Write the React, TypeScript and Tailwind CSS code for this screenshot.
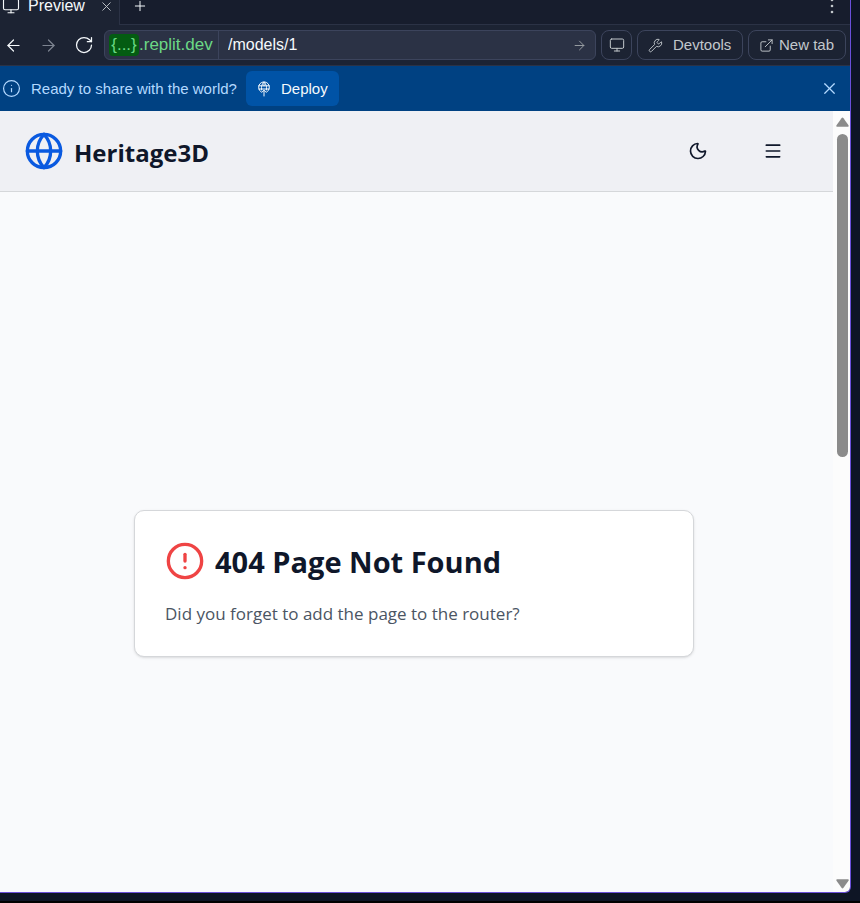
import type { ReactNode } from "react";
import {
  ArrowLeft,
  ArrowRight,
  CircleAlert,
  ExternalLink,
  Globe,
  Info,
  Menu,
  Monitor,
  Moon,
  Plus,
  RotateCw,
  Wrench,
  X,
} from "lucide-react";

function DeployIcon() {
  return (
    <svg
      width="14"
      height="16"
      viewBox="0 0 14 16"
      fill="none"
      stroke="currentColor"
      strokeWidth="1"
      strokeLinecap="round"
      strokeLinejoin="round"
      aria-hidden="true"
    >
      <path d="M4 10.800A5.400 5.400 0 1 1 10 10.800" />
      <path d="M1.800 4.800h10.400M1.800 8h10.400M4.600 9C4 5.600 5 2.600 7 1.200c2 1.400 3 4.400 2.400 7.800M7 1.200V5" />
      <path d="M7 15V9.200M4.800 11.400 7 9.200l2.200 2.200" />
    </svg>
  );
}

function ToolButton({ children, className, label }: { children: ReactNode; className: string; label: string }) {
  return (
    <button
      type="button"
      aria-label={label}
      className={`flex h-[30px] shrink-0 items-center rounded-lg border border-[#3c445c] text-[#c2c8cc] ${className}`}
    >
      {children}
    </button>
  );
}

function TabBar() {
  return (
    <div className="flex h-[25px] items-end overflow-hidden bg-[#171d2d] text-[#f5f9fc]">
      <div className="flex h-[38px] w-[120px] shrink-0 items-center border-r border-[#2b3245] bg-[#1c2333] pl-[2px]">
        <Monitor size={18} strokeWidth={1.5} />
        <span className="ml-2 flex-1 text-base leading-3">Preview</span>
        <button type="button" aria-label="Close tab" className="mr-[5px] text-[#c2c8cc]">
          <X size={15} strokeWidth={1.5} />
        </button>
      </div>
      <div className="flex h-[38px] flex-1 items-center border-b border-[#2b3245] px-3">
        <button type="button" aria-label="Add tab">
          <Plus size={16} strokeWidth={1.5} />
        </button>
        <button type="button" aria-label="More options" className="ml-auto text-[#c2c8cc]">
          <svg width="12" height="16" viewBox="0 0 12 16" fill="currentColor" aria-hidden="true">
            <circle cx="6" cy="2" r="1.300" />
            <circle cx="6" cy="8" r="1.300" />
            <circle cx="6" cy="14" r="1.300" />
          </svg>
        </button>
      </div>
    </div>
  );
}

function Toolbar() {
  return (
    <div className="flex h-[41px] items-center gap-[5px] border-b border-[#2b3245] bg-[#1c2333] pr-1 text-[#f5f9fc]">
      <div className="flex w-[99px] shrink-0 items-center gap-4 pl-1">
        <button type="button" aria-label="Back">
          <ArrowLeft size={19} strokeWidth={1.500} />
        </button>
        <button type="button" aria-label="Forward" className="text-[#7d8491]">
          <ArrowRight size={19} strokeWidth={1.500} />
        </button>
        <button type="button" aria-label="Reload">
          <RotateCw size={20} strokeWidth={1.500} />
        </button>
      </div>
      <div className="flex h-[30px] min-w-0 flex-1 items-center rounded-md border border-[#3c445c] bg-[#2b3245]">
        <div className="flex h-full w-[114px] shrink-0 items-center border-r border-[#3c445c] pl-1 text-[17px] text-[#6bd985]">
          <span className="flex h-[22px] w-[30px] items-center justify-center rounded bg-[#045c12]">{"{...}"}</span>
          <span>.replit.dev</span>
        </div>
        <input
          aria-label="Path"
          defaultValue="/models/1"
          className="min-w-0 flex-1 bg-transparent px-[9px] text-base outline-none"
        />
        <button type="button" aria-label="Go" className="mr-2 text-[#9da2a6]">
          <ArrowRight size={15} strokeWidth={1.500} />
        </button>
      </div>
      <ToolButton label="Device size" className="w-[31px] justify-center">
        <Monitor size={16} strokeWidth={1.500} />
      </ToolButton>
      <ToolButton label="Devtools" className="w-[106px] gap-[10px] pl-[10px]">
        <Wrench size={15} strokeWidth={1.500} />
        <span>Devtools</span>
      </ToolButton>
      <ToolButton label="New tab" className="w-[98px] gap-[5px] pl-[10px]">
        <ExternalLink size={15} strokeWidth={1.500} />
        <span className="whitespace-nowrap">New tab</span>
      </ToolButton>
    </div>
  );
}

function DeployBanner() {
  return (
    <div className="flex h-[45px] items-center bg-[#004182] pl-[2px] text-[#b3d9ff]">
      <Info size={19} strokeWidth={1.500} />
      <span className="ml-[10px]">Ready to share with the world?</span>
      <button type="button" className="ml-[9px] flex h-[35px] items-center gap-[10px] rounded-md bg-[#0053a6] px-[11px] text-[#f5f9fc]">
        <DeployIcon />
        Deploy
      </button>
      <button type="button" aria-label="Dismiss" className="mr-[11px] ml-auto">
        <X size={19} strokeWidth={1.500} />
      </button>
    </div>
  );
}

function Site() {
  return (
    <div className="flex min-w-0 flex-1 flex-col bg-[#f9fafc] font-['Open_Sans','Noto_Sans',sans-serif] text-[#0f172a]">
      <header className="flex h-[81px] items-center border-b border-[#d5d7da] bg-[#eff0f4] pr-10 pl-6">
        <a href="#home" className="flex items-center gap-[10px]">
          <Globe size={40} className="text-[#0a5ae0]" />
          <span className="pt-1 text-2xl leading-8 font-bold">Heritage3D</span>
        </a>
        <button type="button" aria-label="Toggle theme" className="ml-auto p-[10px]">
          <Moon size={20} />
        </button>
        <button type="button" aria-label="Open menu" className="ml-[35px] p-[10px]">
          <Menu size={20} />
        </button>
      </header>
      <main className="flex flex-1 items-center justify-center pt-[82px] pr-[5px]">
        <section className="w-[560px] rounded-[10px] border border-[#d5d7da] bg-white p-[30px] shadow-sm">
          <div className="flex items-center gap-[10px]">
            <CircleAlert size={40} className="text-[#ef4444]" />
            <h1 className="pt-[2px] text-[29px] leading-9 font-bold">404 Page Not Found</h1>
          </div>
          <p className="mt-[21px] text-[17px] leading-6 text-[#4b5563]">
            Did you forget to add the page to the router?
          </p>
        </section>
      </main>
    </div>
  );
}

function Scrollbar() {
  return (
    <div aria-hidden="true" className="flex w-[17px] shrink-0 flex-col items-center bg-[#fcfcfc] pt-[6px] pb-[3px] pl-[2px] text-[#8b8b8b]">
      <svg width="13" height="10" viewBox="0 0 13 10" fill="currentColor">
        <path d="M5.500 1.200q1-1.200 2 0l5 7q.5 1.500-.5 1.500H1q-1.200 0-.5-1.500z" />
      </svg>
      <div className="mt-[7px] h-[323px] w-[11px] rounded-full bg-[#8b8b8b]" />
      <svg width="13" height="10" viewBox="0 0 13 10" fill="currentColor" className="mt-auto rotate-180">
        <path d="M5.500 1.200q1-1.200 2 0l5 7q.5 1.500-.5 1.500H1q-1.200 0-.5-1.500z" />
      </svg>
    </div>
  );
}

export default function App() {
  return (
    <div className="flex min-h-screen flex-col border-b-2 border-black bg-[#0e1525] pr-[9px] pb-2 font-['Liberation_Sans',Arial,sans-serif] text-[15px] leading-5">
      <div className="flex flex-1 flex-col overflow-hidden rounded-br-md border-r border-b border-[#6a4fd8]">
        <TabBar />
        <Toolbar />
        <DeployBanner />
        <div className="flex flex-1">
          <Site />
          <Scrollbar />
        </div>
      </div>
    </div>
  );
}
